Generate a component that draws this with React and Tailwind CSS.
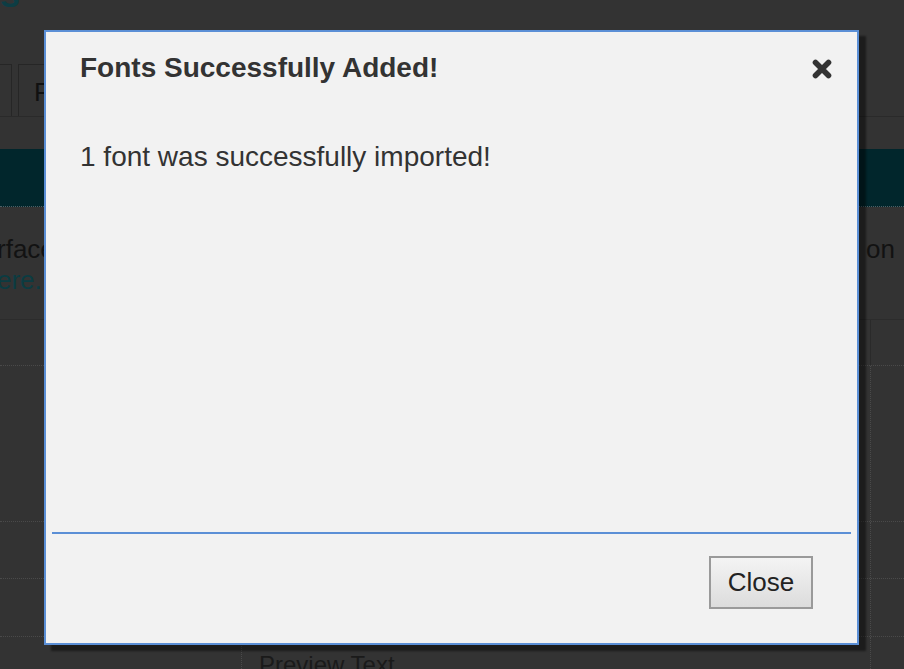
import React from 'react';

function CloseIcon() {
    return (
        <svg width="22" height="22" viewBox="0 0 22 22" aria-hidden="true">
            <path d="M4.5 4.5 L17.5 17.5 M17.5 4.5 L4.5 17.5" stroke="#333" strokeWidth="5.6" strokeLinecap="round" fill="none" />
        </svg>
    );
}

function Row({ h, children }) {
    return (
        <div className={`flex border-b border-dotted border-[#4a4a4a] ${h}`}>
            {children}
            <div className="ml-auto w-[34px] border-l border-dotted border-[#4a4a4a]"></div>
        </div>
    );
}

export default function App() {
    return (
        <div className="relative w-[904px] h-[669px] overflow-hidden bg-[#333333] font-['Liberation_Sans',Arial,sans-serif]">
            {/* Page behind the overlay */}
            <div className="flex flex-col h-[64px] overflow-hidden">
                <div className="-mt-[25px] text-[36px] leading-[40px] font-bold text-[#0d3d44]">s</div>
            </div>

            {/* Tabs */}
            <div className="flex h-[53px] border-b border-[#2a2a2a]">
                <div className="-ml-[20px] w-[32px] border border-b-0 border-[#262626]"></div>
                <div className="ml-[6px] w-[120px] border border-b-0 border-[#262626] pl-[15px] pt-[8px] text-[26px] text-[#111]">F</div>
            </div>

            <div className="mt-[32px] h-[58px] bg-[#01262c] border-b border-dotted border-[#4d5f65]"></div>

            {/* Description */}
            <div className="pt-[27px] h-[113px] border-b border-[#2c2c2c] text-[26px] leading-[31px] text-[#121212]">
                <div className="flex justify-between pr-[9px]">
                    <span className="-ml-[3px]">rface</span>
                    <span>on</span>
                </div>
                <div className="-ml-[3px] text-[#0b3c42]">ere.</div>
            </div>

            {/* Table */}
            <div className="flex h-[46px] border-b border-dotted border-[#4a4a4a]">
                <div className="ml-auto w-[34px] border-l border-[#2a2a2a]"></div>
            </div>
            <Row h="h-[156px]" />
            <Row h="h-[57px]" />
            <Row h="h-[58px]" />
            <div className="flex h-[40px]">
                <div className="ml-[241px] flex-1 border-l border-dotted border-[#4a4a4a] pl-[17px] pt-[14px] text-[24px] leading-[28px] text-[#1a1a1a]">Preview Text</div>
                <div className="w-[34px] border-l border-dotted border-[#4a4a4a]"></div>
            </div>

            {/* Modal */}
            <div className="absolute left-[44px] top-[30px] w-[815px] h-[615px] flex flex-col border-2 border-[#5b8fd6] bg-[#f2f2f2] text-[#333] shadow-[7px_6px_2px_rgba(0,0,0,0.45)]">
                <div className="flex items-center justify-between pl-[34px] pr-[23px] pt-[20px]">
                    <h2 className="text-[28px] leading-[32px] font-bold">Fonts Successfully Added!</h2>
                    <button className="flex items-center justify-center w-[24px] h-[24px] mt-[2px]">
                        <CloseIcon />
                    </button>
                </div>

                <div className="flex-1 pl-[34px] pt-[57px] text-[28px] leading-[32px]">
                    1 font was successfully imported!
                </div>

                <div className="mx-[6px] h-[2px] bg-[#5b8fd6]"></div>

                <div className="flex justify-end pr-[44px] pt-[22px] pb-[34px]">
                    <button className="w-[104px] h-[53px] border-2 border-[#9a9a9a] bg-gradient-to-b from-[#f4f4f4] via-[#e8e8e8] to-[#dcdcdc] text-[26px] text-[#222]">
                        Close
                    </button>
                </div>
            </div>
        </div>
    );
}
